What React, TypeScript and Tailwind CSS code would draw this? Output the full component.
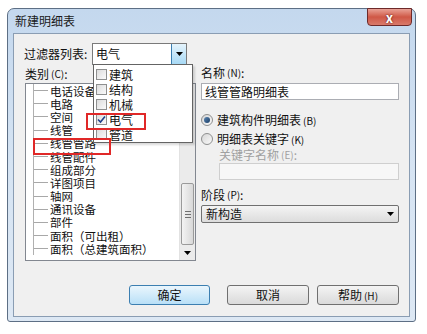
import React from 'react'

const treeItems = [
    '电话设备',
    '电路',
    '空间',
    '线管',
    '线管管路',
    '线管配件',
    '组成部分',
    '详图项目',
    '轴网',
    '通讯设备',
    '部件',
    '面积（可出租）',
    '面积（总建筑面积）',
]

const filterItems = [
    { label: '建筑', checked: false },
    { label: '结构', checked: false },
    { label: '机械', checked: false },
    { label: '电气', checked: true },
    { label: '管道', checked: false },
]

const DownTriangle = ({ className = '' }: { className?: string }) => (
    <svg width="7" height="4" viewBox="0 0 7 4" className={className}>
        <path d="M0 0 L7 0 L3.5 4 Z" fill="#000" />
    </svg>
)

const Checkbox = ({ checked }: { checked: boolean }) => (
    <div className="w-[11px] h-[11px] border border-[#8e8f8f] bg-gradient-to-br from-[#dcdcdc] to-[#fbfbfb] flex items-center justify-center">
        {checked && (
            <svg width="9" height="9" viewBox="0 0 9 9">
                <path
                    d="M1 4.5 L3.5 7 L8 1.5"
                    stroke="#1e3f8a"
                    strokeWidth="1.6"
                    fill="none"
                />
            </svg>
        )}
    </div>
)

const Radio = ({ selected }: { selected: boolean }) => (
    <div className="w-[12px] h-[12px] rounded-full border border-[#8e8f8f] bg-gradient-to-br from-[#d6d6d6] to-[#fafafa] flex items-center justify-center">
        {selected && (
            <div className="w-[6px] h-[6px] rounded-full bg-gradient-to-br from-[#5b86b3] to-[#1b3e66]" />
        )}
    </div>
)

const Small = ({ children }: { children: React.ReactNode }) => (
    <span className="text-[10px] ml-[2px]">{children}</span>
)

const Button = ({
    label,
    primary,
}: {
    label: React.ReactNode
    primary?: boolean
}) => (
    <div
        className={
            primary
                ? 'w-[81px] h-[20px] rounded-[3px] border border-[#3c7fb1] bg-gradient-to-b from-[#eaf6fd] to-[#b9e0f7] flex items-center justify-center text-[12px] leading-[14px]'
                : 'w-[82px] h-[20px] rounded-[3px] border border-[#707070] bg-gradient-to-b from-[#f4f4f4] to-[#dadada] flex items-center justify-center text-[12px] leading-[14px]'
        }
    >
        {label}
    </div>
)

const Tree = () => (
    <div className="w-[171px] h-[178px] border border-[#828790] bg-white flex">
        <div className="flex-1 overflow-hidden">
            {treeItems.map((item) => (
                <div key={item} className="h-[13.2px] flex items-center">
                    <div className="w-[7px]" />
                    <div className="w-[15px] self-stretch border-l border-[#b0b0b0] flex items-center">
                        <div className="h-px w-full bg-[#a8a8a8]" />
                    </div>
                    <span className="ml-[2px] text-[11.5px] leading-[12px] whitespace-nowrap">
                        {item}
                    </span>
                </div>
            ))}
        </div>
        <div className="w-[16px] bg-[#ebebeb] border-l border-[#e2e2e2] flex flex-col">
            <div className="h-[16px] flex items-center justify-center">
                <svg width="7" height="4" viewBox="0 0 7 4">
                    <path d="M0 4 L7 4 L3.5 0 Z" fill="#606060" />
                </svg>
            </div>
            <div className="flex-1" />
            <div className="h-[62px] mx-[1px] rounded-[2px] border border-[#9a9a9a] bg-gradient-to-r from-[#f3f3f3] to-[#d8d8d8] flex flex-col items-center justify-center gap-[2px]">
                <div className="w-[6px] h-px bg-[#707070]" />
                <div className="w-[6px] h-px bg-[#707070]" />
                <div className="w-[6px] h-px bg-[#707070]" />
            </div>
            <div className="h-[15px] flex items-center justify-center">
                <DownTriangle />
            </div>
        </div>
    </div>
)

const App = () => {
    return (
        <div className="w-[427px] h-[334px] bg-white overflow-hidden font-['Noto_Sans_CJK_SC','Microsoft_YaHei',sans-serif] text-[#111]">
            <div className="ml-[7px] mt-[8px] w-[409px] h-[314px] rounded-t-[7px] rounded-b-[3px] border border-[#5d6f85] bg-gradient-to-b from-[#c4d8ee] via-[#d6e4f3] to-[#dde8f4] flex flex-col">
                <div className="h-[24px] flex justify-between items-start">
                    <span className="pl-[7px] pt-[5px] text-[12px] leading-[14px] text-[#1a1a1a]">
                        新建明细表
                    </span>
                    <div className="mr-[3px] -mt-px w-[45px] h-[18px] rounded-b-[4px] border border-[#6d2a2a] bg-gradient-to-b from-[#e8a196] via-[#cf5746] to-[#d97a6b] flex items-center justify-center">
                        <span className="text-white text-[13px] font-bold leading-none [text-shadow:0_0_2px_#400]">
                            x
                        </span>
                    </div>
                </div>
                <div className="relative mx-[5px] w-[397px] h-[284px] border border-[#8a9db3] bg-[#f0f0f0] px-[10px] pt-[9px]">
                    {/* filter row */}
                    <div className="flex items-center h-[22px]">
                        <span className="w-[68px] text-[12px] leading-[14px]">过滤器列表:</span>
                        <div className="w-[95px] h-[22px] border border-[#7a7a7a] bg-white flex items-stretch">
                            <span className="flex-1 pl-[3px] text-[12px] flex items-center">
                                电气
                            </span>
                            <div className="w-[15px] border-l border-[#3c7fb1] bg-gradient-to-b from-[#e5f4fc] to-[#a7d9f5] flex items-center justify-center">
                                <DownTriangle />
                            </div>
                        </div>
                    </div>

                    <div className="flex">
                        <div className="ml-[1px] w-[171px]">
                            <div className="h-[18px] flex items-center text-[12px] leading-[14px]">
                                类别<Small>(C)</Small>:
                            </div>
                            <Tree />
                        </div>
                        <div className="ml-[5px] w-[200px] flex flex-col">
                            <div className="h-[16px] flex items-center text-[12px] leading-[14px]">
                                名称<Small>(N)</Small>:
                            </div>
                            <div className="mt-[2px] h-[17px] border border-[#abadb3] bg-white pl-[3px] text-[12px] leading-[15px]">
                                线管管路明细表
                            </div>
                            <div className="mt-[12px] h-[16px] flex items-center gap-[4px] text-[12px] leading-[14px]">
                                <Radio selected />
                                <span>
                                    建筑构件明细表<Small>(B)</Small>
                                </span>
                            </div>
                            <div className="mt-[3px] h-[16px] flex items-center gap-[4px] text-[12px] leading-[14px]">
                                <Radio selected={false} />
                                <span>
                                    明细表关键字<Small>(K)</Small>
                                </span>
                            </div>
                            <div className="ml-[18px] h-[16px] flex items-center text-[12px] leading-[14px] text-[#a0a0a0]">
                                关键字名称<Small>(E)</Small>:
                            </div>
                            <div className="ml-[18px] h-[17px] border border-[#cfcfcf] bg-[#f7f7f7]" />
                            <div className="mt-[7px] h-[16px] flex items-center text-[12px] leading-[14px]">
                                阶段<Small>(P)</Small>:
                            </div>
                            <div className="mt-[2px] h-[18px] rounded-[2px] border border-[#707070] bg-gradient-to-b from-[#f4f4f4] to-[#dcdcdc] flex items-center justify-between px-[4px] text-[12px] leading-[14px]">
                                <span>新构造</span>
                                <DownTriangle />
                            </div>
                        </div>
                    </div>

                    {/* buttons */}
                    <div className="mt-[24px] flex justify-end gap-[8px]">
                        <Button label="确定" primary />
                        <div className="w-px" />
                        <Button label="取消" />
                        <Button
                            label={
                                <span>
                                    帮助<Small>(H)</Small>
                                </span>
                            }
                        />
                    </div>

                    {/* open filter list */}
                    <div className="absolute left-[79px] top-[30px] w-[100px] h-[79px] border border-[#646464] bg-white pt-[2px] shadow-[2px_2px_2px_rgba(0,0,0,0.15)]">
                        {filterItems.map((f) => (
                            <div
                                key={f.label}
                                className="h-[15px] flex items-center gap-[2px] pl-[2px] text-[12px] leading-[14px]"
                            >
                                <Checkbox checked={f.checked} />
                                <span>{f.label}</span>
                            </div>
                        ))}
                    </div>

                    {/* red markers */}
                    <div className="absolute left-[72px] top-[79px] w-[60px] h-[17px] border-2 border-[#e02828]" />
                    <div className="absolute left-[19px] top-[104px] w-[78px] h-[17px] border-2 border-[#e02828]" />
                </div>
            </div>
        </div>
    )
}

export default App
